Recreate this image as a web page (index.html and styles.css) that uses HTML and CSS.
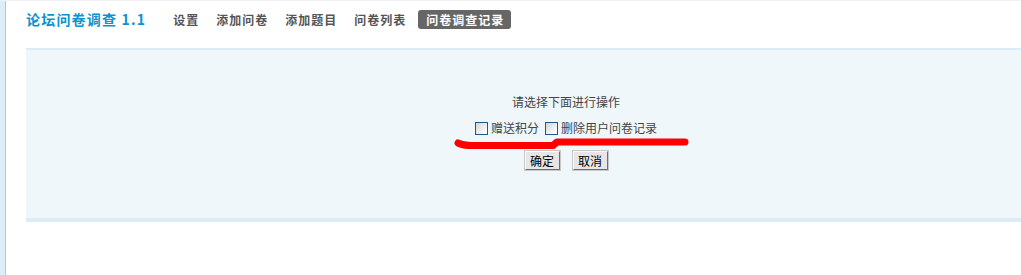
FILE: index.html
```html
<!DOCTYPE html>
<html lang="zh-CN">
<head>
<meta charset="utf-8">
<title>论坛问卷调查</title>
<link rel="stylesheet" href="styles.css">
</head>
<body>
<div class="page">
  <aside class="sidebar"></aside>
  <main class="main">
    <header class="header">
      <h1 class="title">论坛问卷调查 1.1</h1>
      <nav class="nav">
        <a class="nav-item">设置</a>
        <a class="nav-item">添加问卷</a>
        <a class="nav-item">添加题目</a>
        <a class="nav-item">问卷列表</a>
        <a class="nav-item active">问卷调查记录</a>
      </nav>
    </header>
    <section class="panel">
      <div class="panel-body">
        <p class="prompt">请选择下面进行操作</p>
        <div class="options">
          <label class="option"><span class="check"></span>赠送积分</label>
          <label class="option"><span class="check"></span>删除用户问卷记录</label>
        </div>
        <div class="buttons">
          <button class="btn">确定</button>
          <button class="btn">取消</button>
        </div>
      </div>
      <svg class="mark" width="700" height="120" viewBox="0 0 700 120">
        <path d="M432,93 Q437,95.5 446,95.5 L527,95.5 L531,92 L659,92" fill="none" stroke="#ff0000" stroke-width="7" stroke-linecap="round" stroke-linejoin="round"/>
      </svg>
    </section>
  </main>
</div>
</body>
</html>
```
FILE: styles.css
```css
html, body {
  margin: 0;
  padding: 0;
  background: #ffffff;
}
body {
  font-family: "Noto Sans CJK SC", "Liberation Sans", sans-serif;
  font-size: 12px;
  color: #444;
}
.page {
  display: flex;
  min-height: 275px;
  border-top: 1px solid #f2f2f2;
  box-sizing: border-box;
}
.sidebar {
  width: 5px;
  flex: none;
  background: #ddedf8;
  border-right: 1px solid #a9ccdb;
}
.main {
  flex: 1;
  padding-left: 20px;
}
.header {
  height: 47px;
  box-sizing: border-box;
  padding-top: 9px;
  display: flex;
  align-items: flex-start;
}
.title {
  margin: 0;
  font-size: 14px;
  line-height: 19px;
  font-weight: bold;
  color: #0b93cf;
  letter-spacing: 1.2px;
  white-space: nowrap;
}
.nav {
  display: flex;
  margin-left: 27px;
}
.nav-item {
  font-size: 12px;
  line-height: 19px;
  font-weight: bold;
  color: #555;
  letter-spacing: 1px;
  margin-right: 17px;
  white-space: nowrap;
}
.nav-item.active {
  margin-left: -5px;
  background: #666666;
  color: #ffffff;
  padding: 0 7px 0 8px;
  border-radius: 3px;
}
.panel {
  position: relative;
  height: 168px;
  background: #eff7fb;
  border-top: 2px solid #dcebf8;
  border-bottom: 4px solid #dcebf8;
}
.panel-body {
  padding: 43px 0 0 85px;
  text-align: center;
}
.prompt {
  margin: 0;
  line-height: 18px;
  color: #444;
}
.options {
  margin-top: 8px;
  line-height: 18px;
  display: flex;
  justify-content: center;
  gap: 6px;
}
.option {
  display: flex;
  align-items: center;
  color: #444;
}
.check {
  width: 11px;
  height: 11px;
  border: 1px solid #1d5a8a;
  background: linear-gradient(135deg, #d4d4d4 0%, #f6f6f6 70%, #ffffff 100%);
  margin-right: 3px;
}
.buttons {
  margin-top: 14px;
  display: flex;
  justify-content: center;
  gap: 13px;
}
.btn {
  font-family: "Noto Sans CJK SC", "Liberation Sans", sans-serif;
  font-size: 12px;
  color: #000;
  width: 35px;
  height: 19px;
  padding: 0;
  line-height: 15px;
  background: #e6e6e6;
  border: 1px solid;
  border-color: #f8f8f8 #707070 #707070 #f8f8f8;
  box-shadow: 0 0 0 1px #c8c8c8;
}
.mark {
  position: absolute;
  left: 0;
  top: 0;
  pointer-events: none;
}
```
